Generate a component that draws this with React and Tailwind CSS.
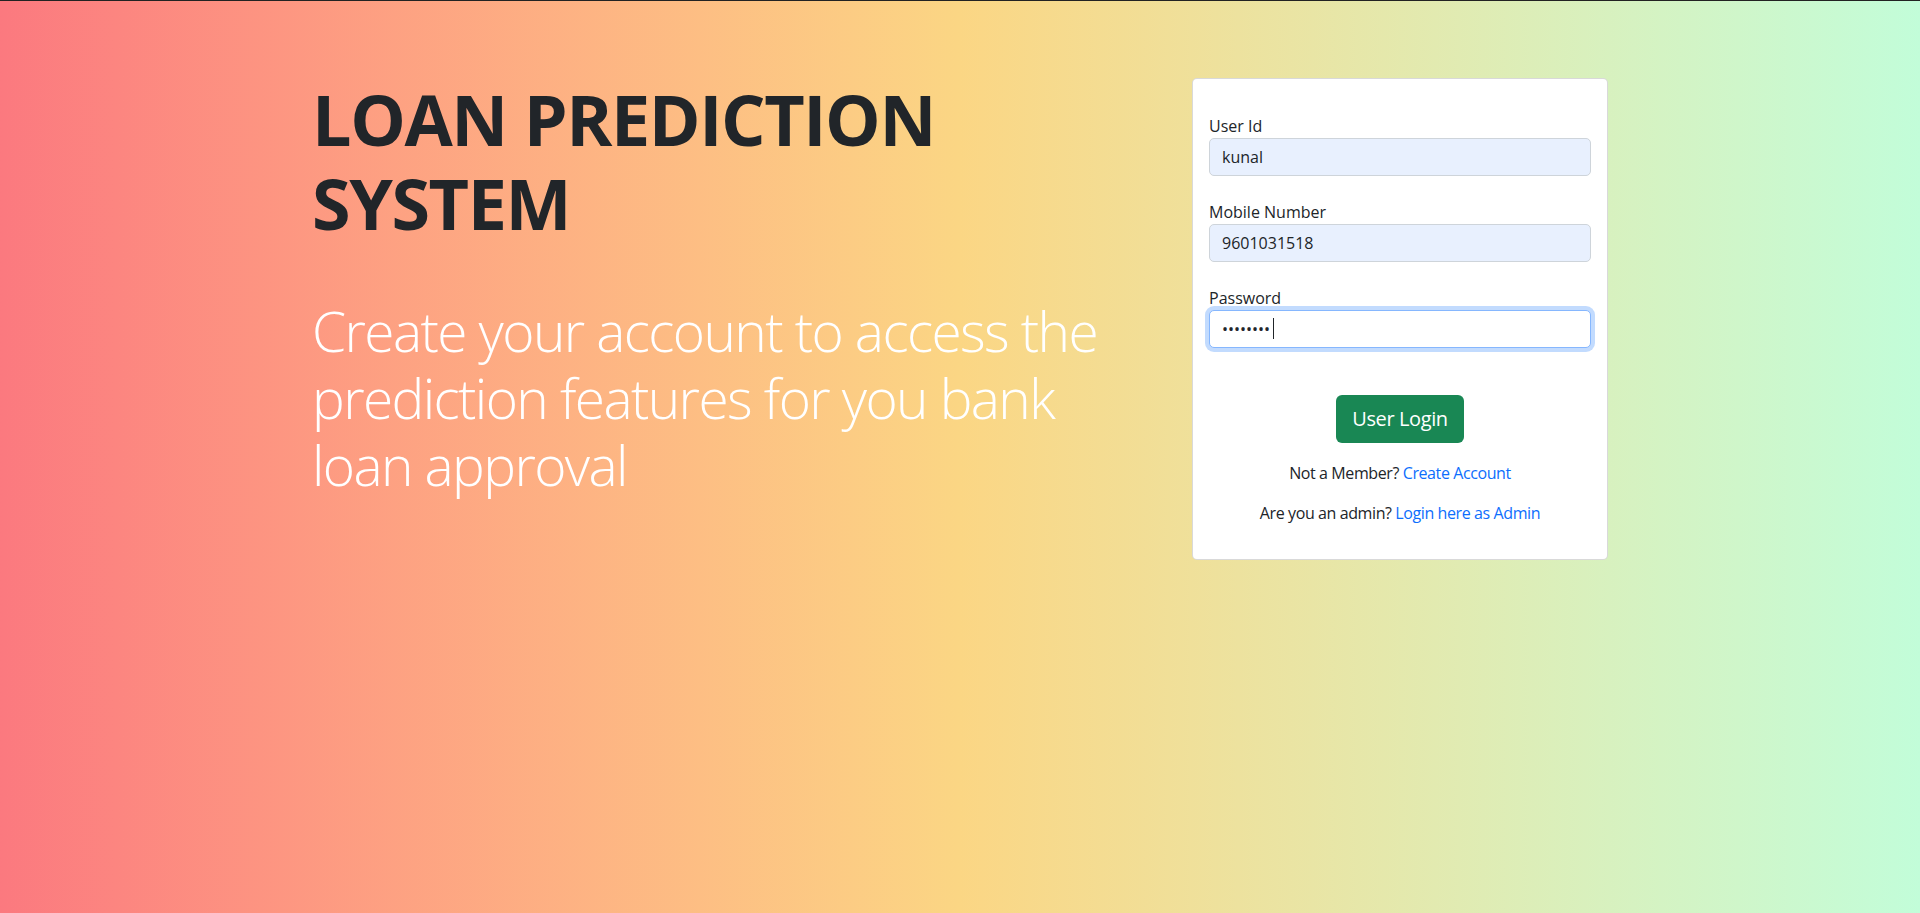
import React from "react";

const font = { fontFamily: '"Open Sans", "Noto Sans", sans-serif' };

function Field({ label, value, type = "text", focused = false, last = false }) {
  return (
    <div className={last ? "" : "mb-6"}>
      <label className="block text-[16px] leading-6 text-[#212529]">{label}</label>
      <div className="relative">
        <input
          type={type}
          readOnly
          value={value}
          className={
            focused
              ? "block h-[38px] w-full rounded-[5px] border border-[#86b7fe] bg-white px-3 text-[16px] text-[#212529] shadow-[0_0_0_4px_rgba(13,110,253,0.25)] outline-none"
              : "block h-[38px] w-full rounded-[5px] border border-[#ced4da] bg-[#e8f0fe] px-3 text-[16px] text-[#212529] outline-none"
          }
        />
        {focused && <span className="absolute left-[64px] top-[8px] h-[21px] w-px bg-[#212529]" />}
      </div>
    </div>
  );
}

export default function App() {
  return (
    <div
      style={font}
      className="min-h-screen w-full border-t border-[#222] bg-gradient-to-r from-[#fb797f] via-[#fbd684] to-[#c2fdd9]"
    >
      <div className="mx-auto flex w-[1320px]">
        <div className="w-[880px] px-3 pt-[76px]">
          <h1 className="text-[70px] font-bold leading-[84px] tracking-[-1.4px] text-[#212529]">
            LOAN PREDICTION SYSTEM
          </h1>
          <p className="mt-[52px] w-[820px] text-[55px] font-light leading-[67px] tracking-[-1.6px] text-white">
            Create your account to access the prediction features for you bank loan approval
          </p>
        </div>
        <div className="w-[440px] px-3 pt-[77px]">
          <div className="rounded-[5px] border border-black/15 bg-white px-4 pb-[34px] pt-[35px]">
            <Field label="User Id" value="kunal" />
            <Field label="Mobile Number" value="9601031518" />
            <Field label="Password" value="kunal123" type="password" focused last />
            <div className="mt-[47px] flex justify-center">
              <button className="h-12 rounded-md bg-[#198754] px-4 text-[20px] leading-[30px] tracking-[-0.4px] text-white">
                User Login
              </button>
            </div>
            <p className="mt-[18px] mb-4 text-center text-[16px] leading-6 tracking-[-0.4px] text-[#212529]">
              Not a Member? <a href="#" className="text-[#0d6efd]">Create Account</a>
            </p>
            <p className="text-center text-[16px] leading-6 tracking-[-0.4px] text-[#212529]">
              Are you an admin? <a href="#" className="text-[#0d6efd]">Login here as Admin</a>
            </p>
          </div>
        </div>
      </div>
    </div>
  );
}
